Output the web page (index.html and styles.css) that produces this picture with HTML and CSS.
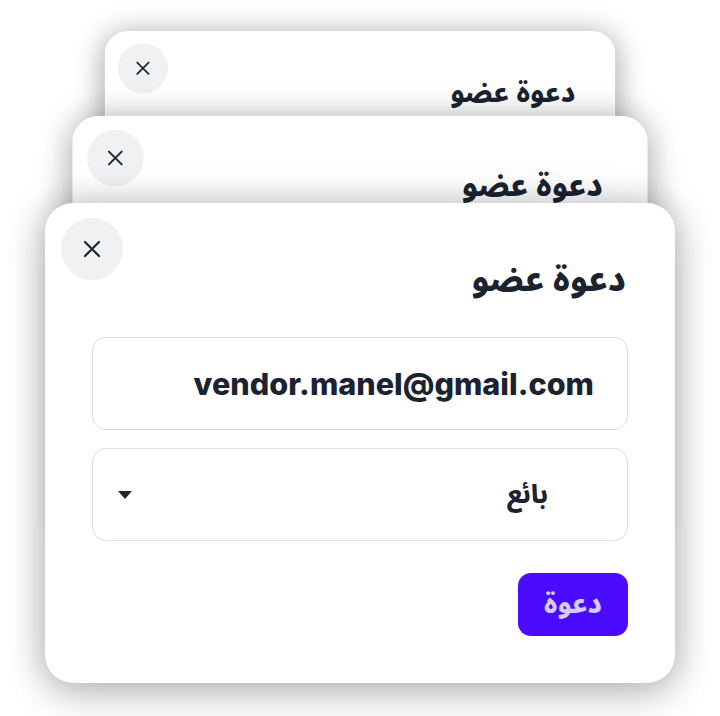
FILE: index.html
```html
<!DOCTYPE html>
<html lang="ar" dir="rtl">
<head>
<meta charset="utf-8">
<title>دعوة عضو</title>
<link rel="stylesheet" href="styles.css">
</head>
<body>
<div class="stage">
  <div class="stack">
    <section class="card card-back2" aria-hidden="true">
      <div class="card-head">
        <h2 class="title">دعوة عضو</h2>
        <button class="close"><svg viewBox="0 0 24 24" width="24" height="24"><path d="M5 5L19 19M19 5L5 19" stroke="#1f2733" stroke-width="2.2" stroke-linecap="round" fill="none"/></svg></button>
      </div>
    </section>
    <section class="card card-back1" aria-hidden="true">
      <div class="card-head">
        <h2 class="title">دعوة عضو</h2>
        <button class="close"><svg viewBox="0 0 24 24" width="24" height="24"><path d="M5 5L19 19M19 5L5 19" stroke="#1f2733" stroke-width="2.2" stroke-linecap="round" fill="none"/></svg></button>
      </div>
    </section>
    <section class="card card-front">
      <div class="card-head">
        <h2 class="title">دعوة عضو</h2>
        <button class="close"><svg viewBox="0 0 24 24" width="24" height="24"><path d="M5 5L19 19M19 5L5 19" stroke="#1f2733" stroke-width="2.2" stroke-linecap="round" fill="none"/></svg></button>
      </div>
      <div class="form">
        <div class="field field-email"><span class="email">vendor.manel@gmail.com</span></div>
        <div class="field field-select">
          <span class="select-value">بائع</span>
          <svg class="caret" viewBox="0 0 14 8" width="14" height="8"><path d="M0 0H14L7 8Z" fill="#1f2733"/></svg>
        </div>
        <div class="actions"><button class="invite">دعوة</button></div>
      </div>
    </section>
  </div>
</div>
</body>
</html>
```
FILE: styles.css
```css
html, body {
  margin: 0;
  padding: 0;
  background: #ffffff;
}
body {
  width: 720px;
  height: 716px;
  overflow: hidden;
  font-family: Inter, "Noto Sans Arabic", sans-serif;
  color: #1b2331;
}
.stage {
  padding-top: 203px;
  display: flex;
  justify-content: center;
}
.stack {
  display: grid;
  width: 630px;
}
.card {
  grid-area: 1 / 1;
  position: relative;
  width: 630px;
  height: 480px;
  box-sizing: border-box;
  background: #ffffff;
  border-radius: 28px;
  padding: 15px 16px 0 16px;
  box-shadow: 0 0 36px rgba(0, 0, 0, 0.24), 0 14px 40px rgba(0, 0, 0, 0.16);
  transform-origin: 50% 0;
}
.card-back2 {
  z-index: 1;
  transform: translateY(-172px) scale(0.81);
}
.card-back1 {
  z-index: 2;
  transform: translateY(-87px) scale(0.913);
}
.card-front {
  z-index: 3;
}
.card-head {
  display: flex;
  justify-content: space-between;
  align-items: flex-start;
}
.title {
  margin: 38px 33px 0 0;
  font-family: "Noto Sans Arabic", sans-serif;
  font-weight: 800;
  font-size: 34px;
  line-height: 48px;
  color: #1b2331;
}
.close {
  width: 62px;
  height: 62px;
  border: none;
  border-radius: 50%;
  background: #f0f1f2;
  display: flex;
  align-items: center;
  justify-content: center;
  padding: 0;
}
.form {
  margin-top: 33px;
  padding: 0 31px;
  display: flex;
  flex-direction: column;
  gap: 18px;
}
.field {
  height: 93px;
  box-sizing: border-box;
  border: 1.5px solid #dedee0;
  border-radius: 14px;
  display: flex;
  align-items: center;
}
.field-email {
  padding-right: 33px;
}
.email {
  font-family: Inter, sans-serif;
  font-weight: 800;
  font-size: 30.6px;
  direction: ltr;
}
.field-select {
  padding: 0 79px 0 25px;
  justify-content: space-between;
}
.select-value {
  font-family: "Noto Sans Arabic", sans-serif;
  font-weight: 800;
  font-size: 26px;
}
.actions {
  margin-top: 14px;
  display: flex;
}
.invite {
  width: 110px;
  height: 63px;
  border: none;
  border-radius: 13px;
  background: #4a0bff;
  color: #d6cbff;
  font-family: "Noto Sans Arabic", sans-serif;
  font-weight: 800;
  font-size: 27px;
  line-height: 1;
  padding: 0;
}
```
